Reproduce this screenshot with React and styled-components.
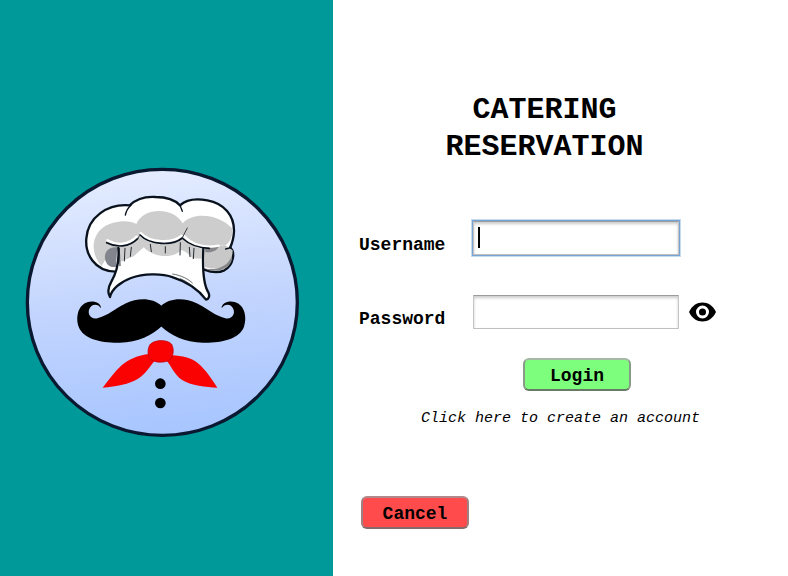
import React, { useState } from "react";
import styled, { createGlobalStyle } from "styled-components";

const GlobalStyle = createGlobalStyle`
  * { box-sizing: border-box; }
  body {
    margin: 0;
    background: #ffffff;
    color: #000000;
    font-family: "Courier New", "Liberation Mono", monospace;
  }
`;

const Page = styled.div`
  display: grid;
  grid-template-columns: minmax(0, 333fr) minmax(0, 455fr);
  min-height: 100vh;
`;

const BrandPanel = styled.aside`
  background: #009999;
  padding: 167px 34px 32px 25px;
`;

const Logo = styled.svg`
  display: block;
  width: 100%;
  height: auto;
`;

const Main = styled.main`
  display: flex;
  flex-direction: column;
  padding: 92px 26px 32px;
`;

const Title = styled.h1`
  margin: 0 0 55px;
  padding-right: 32px;
  font-size: 30px;
  line-height: 37px;
  font-weight: bold;
  text-align: center;
`;

const TitleLine = styled.span`
  display: block;
`;

const Form = styled.form`
  display: grid;
  grid-template-columns: 114px minmax(0, 206px) 27px;
  row-gap: 40px;
  align-items: center;
`;

const Label = styled.label`
  grid-column: 1;
  padding-top: 13px;
  font-size: 18px;
  line-height: 20px;
  font-weight: bold;
`;

const Field = styled.div`
  grid-column: 2;
  position: relative;
`;

const TextInput = styled.input`
  display: block;
  width: 100%;
  height: 34px;
  padding: 0 6px;
  border: 1px solid;
  border-color: #9c9c9c #c4c4c4 #c0c0c0;
  border-radius: 0;
  outline: none;
  background: #ffffff;
  font: 18px "Courier New", "Liberation Mono", monospace;
  caret-color: transparent;
  box-shadow: ${(p) =>
    p.$active
      ? "0 0 0 1px #76a5d5, 0 0 0 2px #c3daf0, inset 0 2px 3px #cccccc"
      : "inset 0 2px 3px #cccccc"};
`;

const Caret = styled.span`
  position: absolute;
  left: 5px;
  top: 6px;
  width: 2px;
  height: 21px;
  background: #000000;
  pointer-events: none;
`;

const EyeButton = styled.button`
  grid-column: 3;
  display: flex;
  margin-left: 10px;
  padding: 0;
  border: 0;
  background: none;
  cursor: pointer;
`;

const EyeIcon = styled.svg`
  flex: none;
  width: 27px;
  height: 20px;
`;

const ActionButton = styled.button`
  width: 108px;
  height: 33px;
  padding: 2px 0 0;
  border: 2px solid;
  border-color: ${(p) => (p.$tone === "go" ? "#a6b8a6 #8a9a8a #667a66" : "#b08a8a #a08080 #866a6a")};
  border-radius: 6px;
  background: ${(p) => (p.$tone === "go" ? "#7dff7d" : "#ff4b4b")};
  color: #000000;
  font: bold 18px/20px "Courier New", "Liberation Mono", monospace;
  cursor: pointer;
`;

const LoginRow = styled.div`
  grid-column: 2;
  display: flex;
  justify-content: center;
  margin-top: -11px;
  padding-left: 2px;
`;

const SignupLink = styled.a`
  align-self: center;
  margin-top: 18px;
  color: #000000;
  font-size: 15px;
  line-height: 20px;
  font-style: italic;
  text-decoration: none;
  white-space: nowrap;
`;

const Footer = styled.div`
  margin-top: 67px;
  padding-left: 2px;
`;

function ChefLogo() {
  return (
    <Logo viewBox="15 21 822 810" role="img" aria-label="Chef with a moustache">
      <defs>
        <linearGradient id="disc" x1="0.45" y1="0" x2="0.55" y2="1">
          <stop offset="0" stopColor="#e4ecff" />
          <stop offset="0.5" stopColor="#c3d5fe" />
          <stop offset="1" stopColor="#a7c5ff" />
        </linearGradient>
      </defs>
      <ellipse cx="427" cy="427" rx="405" ry="399" fill="url(#disc)" stroke="#0a1830" strokeWidth="10" />

      <g strokeLinecap="round" strokeLinejoin="round">
        <path
          d="M287 335C222 334 195 280 199 235C204 171 263 130 329 136C351 115 379 109 407 111C438 111 464 119 480 136C500 117 529 115 562 121C612 130 643 166 642 214C641 234 637 249 630 263C647 275 641 316 613 331C596 339 573 337 553 329L287 335Z"
          fill="#fff"
          stroke="#08111c"
          strokeWidth="7"
        />
        <path d="M245 318C201 271 217 193 297 185C319 182 337 186 349 192C368 141 461 139 488 190C518 155 596 161 636 205C639 226 632 246 616 256L490 262L300 265L257 297Z" fill="#cdcdcd" />
        <path d="M554 262L616 256L638 271C638 300 621 319 599 323C582 328 568 325 554 320Z" fill="#c8c8c8" />
        <path d="M555 264L596 261C586 276 571 278 556 276Z" fill="#85858a" />
        <path d="M556 326C595 332 626 316 635 287C643 320 592 345 556 326Z" fill="#87878a" />
        <path d="M292 262C265 258 250 278 256 301C262 321 278 323 288 320Z" fill="#82858e" />
        <path
          d="M295 258C299 298 290 338 273 367C262 386 263 399 270 411C275 388 300 366 333 354C369 341 423 339 459 352C501 365 535 388 558 419C567 417 570 408 565 397C551 375 547 329 550 264L490 237C450 263 390 256 358 226C344 248 324 259 295 258Z"
          fill="#fff"
        />
        <path d="M297 260C324 259 344 250 358 228C391 257 442 261 490 238C510 255 529 264 547 266L545 296L519 295C508 286 497 273 484 270C464 294 405 297 371 262L341 289L302 305Z" fill="#cdcdcd" />
        <path
          d="M295 264C298 300 290 338 273 367C262 386 263 399 270 411C275 388 300 366 333 354C369 341 423 339 459 352C501 365 535 388 558 419C567 417 570 408 565 397C551 375 547 329 550 266"
          fill="none"
          stroke="#08111c"
          strokeWidth="7"
        />
        <path d="M262 241C290 257 325 256 350 230M362 219C391 249 455 252 485 227M493 229C515 252 550 266 596 257" fill="none" stroke="#fff" strokeWidth="7" />
        <path d="M260 248C289 263 327 263 353 236M360 225C389 255 457 259 487 234M490 237C512 257 535 264 568 265" fill="none" stroke="#08111c" strokeWidth="5" />
        <path d="M487 233L502 204M353 236L358 228" fill="none" stroke="#3b4046" strokeWidth="3" />
        <path d="M316 165C319 151 326 142 333 136M480 136L487 154M617 267L633 263" fill="none" stroke="#08111c" strokeWidth="4" />
        <path d="M298 265L300 317M315 265L313 303M334 262L331 289M391 253L394 275M436 260L436 279M481 248L480 285M508 262L510 290M522 265L520 296" fill="none" stroke="#24282e" strokeWidth="3" />
        <path d="M458 342C484 346 507 358 517 369M481 356C496 363 507 369 514 376" fill="none" stroke="#20252c" strokeWidth="2" />
      </g>

      <path
        id="moustache-half"
        d="M425 438C398 413 354 413 318 430C281 448 265 467 232 475C211 479 202 461 208 447C214 432 233 429 243 445C244 428 221 421 204 426C172 435 167 475 176 500C190 537 243 549 299 548C354 547 397 526 425 499Z"
      />
      <use href="#moustache-half" transform="translate(848 0) scale(-1 1)" />

      <g fill="#fb0202">
        <path d="M388 582C353 586 325 598 305 616C284 635 266 660 248 683C290 680 328 672 353 657C378 641 389 619 404 602Z" />
        <path d="M456 586C486 588 513 592 533 609C557 629 575 656 592 683C559 680 513 678 485 659C461 641 455 619 440 602Z" />
        <path d="M388 557C398 538 443 537 455 553C463 568 461 589 449 600C435 609 407 609 393 599C382 590 382 570 388 557Z" stroke="#b50006" strokeWidth="2" />
      </g>
      <circle cx="421" cy="671" r="16" />
      <circle cx="421" cy="729" r="16" />
    </Logo>
  );
}

export default function App() {
  const [active, setActive] = useState("username");
  const [values, setValues] = useState({ username: "", password: "" });
  const [visible, setVisible] = useState(false);

  const bind = (name) => ({
    id: name,
    name,
    value: values[name],
    $active: active === name,
    onFocus: () => setActive(name),
    onChange: (e) => setValues({ ...values, [name]: e.target.value }),
  });

  return (
    <>
      <GlobalStyle />
      <Page>
        <BrandPanel>
          <ChefLogo />
        </BrandPanel>
        <Main>
          <Title>
            <TitleLine>CATERING</TitleLine>
            <TitleLine>RESERVATION</TitleLine>
          </Title>
          <Form id="login" onSubmit={(e) => e.preventDefault()}>
            <Label htmlFor="username">Username</Label>
            <Field>
              <TextInput type="text" {...bind("username")} />
              {active === "username" && !values.username && <Caret />}
            </Field>
            <Label htmlFor="password">Password</Label>
            <Field>
              <TextInput type={visible ? "text" : "password"} {...bind("password")} />
              {active === "password" && !values.password && <Caret />}
            </Field>
            <EyeButton type="button" aria-label="Show password" onClick={() => setVisible(!visible)}>
              <EyeIcon viewBox="0 0 54 40">
                <path d="M0 20C6 7 16 1 27 1S48 7 54 20C48 33 38 39 27 39S6 33 0 20Z" />
                <circle cx="27" cy="20" r="10" fill="none" stroke="#fff" strokeWidth="6" />
              </EyeIcon>
            </EyeButton>
            <LoginRow>
              <ActionButton type="submit" $tone="go">Login</ActionButton>
            </LoginRow>
          </Form>
          <SignupLink href="#signup">Click here to create an account</SignupLink>
          <Footer>
            <ActionButton type="button" $tone="stop">Cancel</ActionButton>
          </Footer>
        </Main>
      </Page>
    </>
  );
}
